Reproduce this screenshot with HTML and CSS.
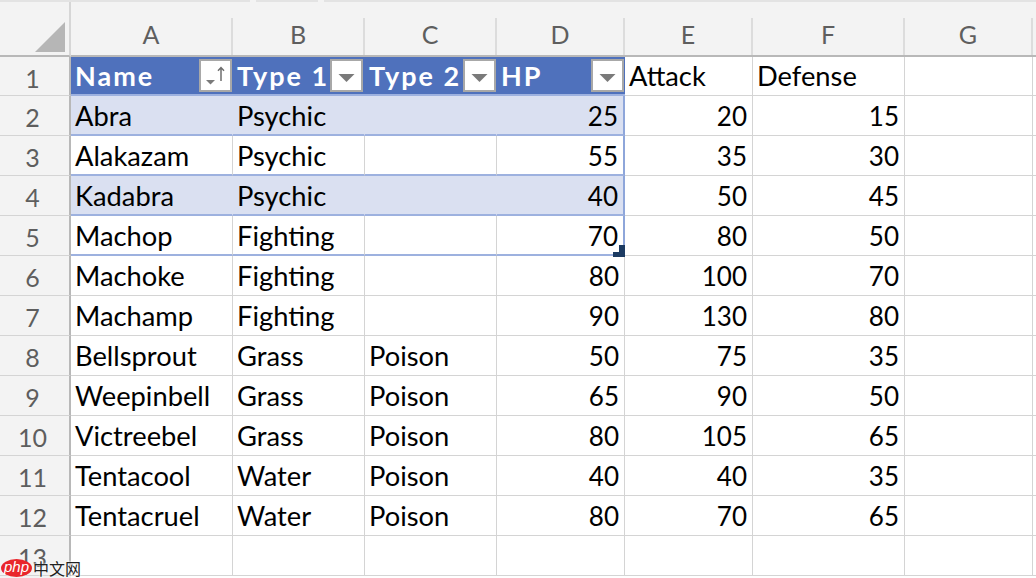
FILE: index.html
```html
<!DOCTYPE html>
<html lang="en">
<head>
<meta charset="utf-8">
<title>Pokemon sheet</title>
<link rel="stylesheet" href="styles.css">
</head>
<body>
<div class="tabs"><span class="tab t1"></span><span class="tab t2"></span><span class="tab t3"></span></div>
<main class="sheet">
  <div class="corner"><svg class="tri" width="32" height="32" viewBox="0 0 32 32"><path d="M1 31 31 1v30z"/></svg></div>
  <div class="col">A</div><div class="col">B</div><div class="col">C</div><div class="col">D</div><div class="col">E</div><div class="col">F</div><div class="col">G</div><div class="col end"></div>

  <div class="rh">1</div>
  <div class="c th">Name<span class="btn"><svg width="29" height="29" viewBox="0 0 29 29"><path class="gr" d="M5 19h9l-4.500 4.500z"/><path class="ar" d="M20 20V7M17 9.800 20 6.600l3 3.200"/></svg></span></div>
  <div class="c th">Type 1<span class="btn nudge"><svg width="29" height="29" viewBox="0 0 29 29"><path class="gr" d="M6.500 13h16l-8 8z"/></svg></span></div>
  <div class="c th">Type 2<span class="btn"><svg width="29" height="29" viewBox="0 0 29 29"><path class="gr" d="M6.500 13h16l-8 8z"/></svg></span></div>
  <div class="c th">HP<span class="btn"><svg width="29" height="29" viewBox="0 0 29 29"><path class="gr" d="M6.500 13h16l-8 8z"/></svg></span></div>
  <div class="c top">Attack</div><div class="c top">Defense</div><div class="c"></div><div class="c"></div>

  <div class="rh">2</div>
  <div class="c t band">Abra</div><div class="c t band">Psychic</div><div class="c t band"></div><div class="c t band last n">25</div>
  <div class="c n">20</div><div class="c n">15</div><div class="c"></div><div class="c"></div>

  <div class="rh">3</div>
  <div class="c t">Alakazam</div><div class="c t">Psychic</div><div class="c t"></div><div class="c t last n">55</div>
  <div class="c n">35</div><div class="c n">30</div><div class="c"></div><div class="c"></div>

  <div class="rh">4</div>
  <div class="c t band">Kadabra</div><div class="c t band">Psychic</div><div class="c t band"></div><div class="c t band last n">40</div>
  <div class="c n">50</div><div class="c n">45</div><div class="c"></div><div class="c"></div>

  <div class="rh">5</div>
  <div class="c t">Machop</div><div class="c t">Fighting</div><div class="c t"></div><div class="c t last n">70</div>
  <div class="c n">80</div><div class="c n">50</div><div class="c"></div><div class="c"></div>

  <div class="rh">6</div>
  <div class="c">Machoke</div><div class="c">Fighting</div><div class="c"></div><div class="c n">80</div>
  <div class="c n">100</div><div class="c n">70</div><div class="c"></div><div class="c"></div>

  <div class="rh">7</div>
  <div class="c">Machamp</div><div class="c">Fighting</div><div class="c"></div><div class="c n">90</div>
  <div class="c n">130</div><div class="c n">80</div><div class="c"></div><div class="c"></div>

  <div class="rh">8</div>
  <div class="c">Bellsprout</div><div class="c">Grass</div><div class="c">Poison</div><div class="c n">50</div>
  <div class="c n">75</div><div class="c n">35</div><div class="c"></div><div class="c"></div>

  <div class="rh">9</div>
  <div class="c">Weepinbell</div><div class="c">Grass</div><div class="c">Poison</div><div class="c n">65</div>
  <div class="c n">90</div><div class="c n">50</div><div class="c"></div><div class="c"></div>

  <div class="rh">10</div>
  <div class="c">Victreebel</div><div class="c">Grass</div><div class="c">Poison</div><div class="c n">80</div>
  <div class="c n">105</div><div class="c n">65</div><div class="c"></div><div class="c"></div>

  <div class="rh">11</div>
  <div class="c">Tentacool</div><div class="c">Water</div><div class="c">Poison</div><div class="c n">40</div>
  <div class="c n">40</div><div class="c n">35</div><div class="c"></div><div class="c"></div>

  <div class="rh">12</div>
  <div class="c">Tentacruel</div><div class="c">Water</div><div class="c">Poison</div><div class="c n">80</div>
  <div class="c n">70</div><div class="c n">65</div><div class="c"></div><div class="c"></div>

  <div class="rh">13</div>
  <div class="c"></div><div class="c"></div><div class="c"></div><div class="c"></div><div class="c"></div><div class="c"></div><div class="c"></div><div class="c"></div>
</main>
<div class="handle"></div>
<div class="mark"><span class="php">php</span><span class="cn">中文网</span></div>
</body>
</html>
```
FILE: styles.css
```css
html, body {
  margin: 0;
  height: 578px;
  overflow: hidden;
  background: linear-gradient(90deg, #f3f3f3 71px, #fff 71px);
  font-family: "Lato", "Noto Sans", sans-serif;
}
.tabs {
  display: flex;
  height: 2px;
  background: #f3f3f3;
}
.tab { background: #e3e3e3; height: 2px; }
.t1 { width: 250px; }
.t2 { width: 62px; margin-left: 6px; }
.t3 { flex: 1; margin-left: 6px; }

.sheet {
  display: grid;
  grid-template-columns: 71px 162px 132px 132px 128px 128px 152px 128px 1fr;
  grid-template-rows: 55px 39px repeat(12, 40px);
  background: #fff;
}
.corner {
  background: #f3f3f3;
  border-right: 2px solid #d6d6d6;
  border-bottom: 2px solid #b8b8b8;
  box-sizing: border-box;
  display: flex;
  align-items: flex-end;
  justify-content: flex-end;
  padding: 0 3px 2px 0;
}
.tri path { fill: #b6b6b6; }
.col {
  background: linear-gradient(#f3f3f3 16px, #dcdcdc 16px) right / 2px 100% no-repeat, #f3f3f3;
  border-bottom: 2px solid #b8b8b8;
  box-sizing: border-box;
  color: #5e5e5e;
  font-size: 25px;
  text-align: center;
  line-height: 30px;
  padding: 17px 2px 0 0;
}
.col.end { background: #f3f3f3; }
.rh {
  background: #f3f3f3;
  border-right: 2px solid #b8b8b8;
  border-bottom: 1px solid #d4d4d4;
  box-sizing: border-box;
  color: #5e5e5e;
  font-size: 25px;
  line-height: 42px;
  text-align: center;
  padding-right: 4px;
  overflow: hidden;
}
.c {
  border-right: 1px solid #d4d4d4;
  border-bottom: 1px solid #d4d4d4;
  box-sizing: border-box;
  color: #000;
  font-size: 27.3px;
  line-height: 40px;
  padding: 0 5px 0 4px;
  white-space: nowrap;
  overflow: hidden;
}
.top { line-height: 38px; }
.n { text-align: right; font-size: 26px; line-height: 41px; }
.th {
  background: #4f71bc;
  border-right: 0;
  border-bottom: 2px solid #9db1df;
  color: #fff;
  font-size: 27px;
  font-weight: 700;
  letter-spacing: 2px;
  line-height: 38px;
  position: relative;
}
.btn {
  position: absolute;
  right: 1px;
  top: 2px;
  width: 29px;
  height: 29px;
  background: #fff;
  border: 2px solid #a8a8a8;
}
.nudge { right: 2px; }
.btn svg { display: block; }
.gr { fill: #7a7a7a; }
.ar { fill: none; stroke: #6e6e6e; stroke-width: 1.500; }
.t { border-bottom: 2px solid #9db1df; }
.band { background: #dae0f1; border-right-color: #dae0f1; }
.last { border-right: 2px solid #8ea6da; }

.handle {
  position: absolute;
  left: 613px;
  top: 245px;
  width: 12px;
  height: 12px;
  background: #1c3b62;
  clip-path: polygon(50% 0, 100% 0, 100% 100%, 0 100%, 0 58%, 50% 58%);
}
.mark {
  position: absolute;
  left: 1px;
  top: 559px;
  display: flex;
  align-items: center;
  gap: 1px;
}
.php {
  display: block;
  width: 31px;
  height: 18px;
  border-radius: 50%;
  background: #e9252b;
  color: #fff;
  font-size: 15px;
  font-style: italic;
  font-family: "Liberation Sans", sans-serif;
  line-height: 16px;
  text-align: center;
}
.cn {
  font-family: "Noto Sans CJK SC", sans-serif;
  font-size: 16px;
  line-height: 18px;
  color: #222;
  text-shadow: 0 0 2px #fff, 0 0 2px #fff;
}
```
